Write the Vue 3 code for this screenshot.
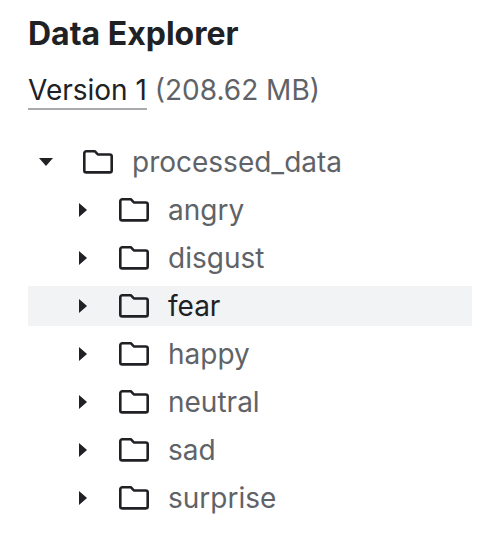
<script setup>
const children = ['angry', 'disgust', 'fear', 'happy', 'neutral', 'sad', 'surprise']
</script>

<template>
  <div class="page">
    <h2 class="title">Data Explorer</h2>
    <div class="version"><span class="vlink">Version 1</span> <span class="size">(208.62 MB)</span></div>
    <div class="tree">
      <div class="row root">
        <svg class="caret" width="14" height="8" viewBox="0 0 14 8"><path d="M0 0h14L7 8z" fill="#202124"/></svg>
        <svg class="folder" width="30" height="24" viewBox="0 0 30 24"><path d="M1.300 3.300a2 2 0 0 1 2-2h8.700l2.900 3.200h11.800a2 2 0 0 1 2 2v13.900a2 2 0 0 1-2 2H3.300a2 2 0 0 1-2-2z" fill="none" stroke="#202124" stroke-width="2.600" stroke-linejoin="round"/></svg>
        <span class="label">processed_data</span>
      </div>
      <div v-for="c in children" :key="c" class="row child" :class="{ active: c === 'fear' }">
        <svg class="caret" width="8" height="14" viewBox="0 0 8 14"><path d="M0 0l8 7-8 7z" fill="#202124"/></svg>
        <svg class="folder" width="30" height="24" viewBox="0 0 30 24"><path d="M1.300 3.300a2 2 0 0 1 2-2h8.700l2.900 3.200h11.800a2 2 0 0 1 2 2v13.900a2 2 0 0 1-2 2H3.300a2 2 0 0 1-2-2z" fill="none" stroke="#202124" stroke-width="2.600" stroke-linejoin="round"/></svg>
        <span class="label">{{ c }}</span>
      </div>
    </div>
  </div>
</template>

<style>
html, body { margin: 0; background: #fff; }
</style>

<style scoped>
.page { width: 494px; height: 542px; box-sizing: border-box; padding: 14px 22px 0 28px; font-family: Inter, "Liberation Sans", sans-serif; overflow: hidden; }
.title { margin: 0; font-size: 32px; line-height: 40px; font-weight: 700; color: #202124; }
.version { margin-top: 18px; font-size: 28px; line-height: 36px; color: #5f6368; white-space: nowrap; }
.vlink { color: #202124; border-bottom: 2px solid #a8aaad; display: inline-block; }
.tree { margin-top: 32px; display: flex; flex-direction: column; gap: 8px; }
.row { height: 40px; display: flex; align-items: center; color: #5f6368; font-size: 28px; }
.root { padding-left: 11px; }
.child { padding-left: 51px; }
.caret { flex: none; }
.root .folder { margin-left: 30px; margin-right: 19px; }
.child .folder { margin-left: 32px; margin-right: 19px; }
.active { background: #f1f3f4; }
.active .label { color: #202124; }
</style>
